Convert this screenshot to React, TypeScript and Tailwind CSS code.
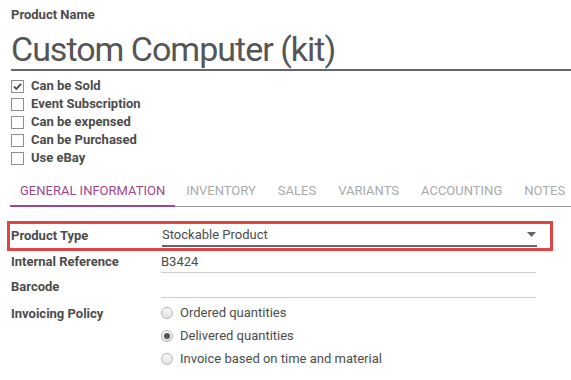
import React from "react";

const checks = [
  { label: "Can be Sold", checked: true },
  { label: "Event Subscription", checked: false },
  { label: "Can be expensed", checked: false },
  { label: "Can be Purchased", checked: false },
  { label: "Use eBay", checked: false },
];

const tabs = ["GENERAL INFORMATION", "INVENTORY", "SALES", "VARIANTS", "ACCOUNTING", "NOTES"];

const policies = [
  { label: "Ordered quantities", checked: false },
  { label: "Delivered quantities", checked: true },
  { label: "Invoice based on time and material", checked: false },
];

function CheckBox({ checked }: { checked: boolean }) {
  return (
    <span className="flex h-[13px] w-[13px] items-center justify-center border border-[#8f8f8f] bg-white">
      {checked && (
        <svg width="11" height="11" viewBox="0 0 11 11">
          <path d="M2 5.5 L4.3 8 L9 2.8" fill="none" stroke="#444" strokeWidth="1.8" />
        </svg>
      )}
    </span>
  );
}

function Radio({ checked }: { checked: boolean }) {
  return (
    <span className="flex h-[12px] w-[12px] items-center justify-center rounded-full border border-[#b5b5b5] bg-gradient-to-b from-[#fafafa] to-[#e2e2e2]">
      {checked && <span className="h-[6px] w-[6px] rounded-full bg-[#555]" />}
    </span>
  );
}

export default function App() {
  return (
    <div className="h-[380px] w-[571px] overflow-hidden bg-white font-['Roboto',sans-serif] text-[#4c4c4c]">
      <div className="pl-[11px] pt-[6px]">
        <div className="text-[13px] font-bold leading-[18px]">Product Name</div>
        <div className="mt-[5px] whitespace-nowrap border-b-2 border-[#666] text-[34px] leading-[40px] tracking-[-1px] text-[#555]">
          Custom Computer (kit)
        </div>

        <div className="mt-[6px] flex flex-col">
          {checks.map((c) => (
            <div key={c.label} className="flex h-[18px] items-center gap-[7px]">
              <CheckBox checked={c.checked} />
              <span className="text-[13px] font-bold">{c.label}</span>
            </div>
          ))}
        </div>
      </div>

      <div className="mt-[14px] ml-[10px] flex border-b border-[#999]">
        {tabs.map((t, i) => (
          <div
            key={t}
            className={
              i === 0
                ? "-mb-px whitespace-nowrap border-b-2 border-[#a0468c] px-[10px] pb-[4px] text-[13px] text-[#a0468c]"
                : "whitespace-nowrap px-[11px] pb-[4px] text-[13px] text-[#aaa] last:pr-0"
            }
          >
            {t}
          </div>
        ))}
      </div>

      <div className="mt-[14px] pl-[7px]">
        <div className="flex h-[30px] w-[546px] items-center border-[3px] border-[#e04444] pl-[1px]">
          <span className="w-[151px] text-[13px] font-bold">Product Type</span>
          <div className="flex h-[22px] w-[375px] items-center justify-between border-b-2 border-[#666]">
            <span className="text-[13px]">Stockable Product</span>
            <svg width="9" height="5" viewBox="0 0 9 5" className="mr-[1px]">
              <path d="M0 0 H9 L4.5 5 Z" fill="#666" />
            </svg>
          </div>
        </div>
      </div>

      <div className="pl-[11px]">
        <div className="flex items-center">
          <span className="w-[150px] text-[13px] font-bold">Internal Reference</span>
          <div className="h-[22px] w-[375px] border-b border-[#ccc] text-[13px] leading-[22px]">B3424</div>
        </div>
        <div className="mt-[3px] flex items-center">
          <span className="w-[150px] text-[13px] font-bold">Barcode</span>
          <div className="h-[22px] w-[375px] border-b border-[#ccc]" />
        </div>
        <div className="mt-[4px] flex">
          <span className="w-[150px] pt-[2px] text-[13px] font-bold">Invoicing Policy</span>
          <div className="flex flex-col">
            {policies.map((p) => (
              <div key={p.label} className="flex h-[23px] items-center gap-[7px]">
                <Radio checked={p.checked} />
                <span className="text-[13px]">{p.label}</span>
              </div>
            ))}
          </div>
        </div>
      </div>
    </div>
  );
}
